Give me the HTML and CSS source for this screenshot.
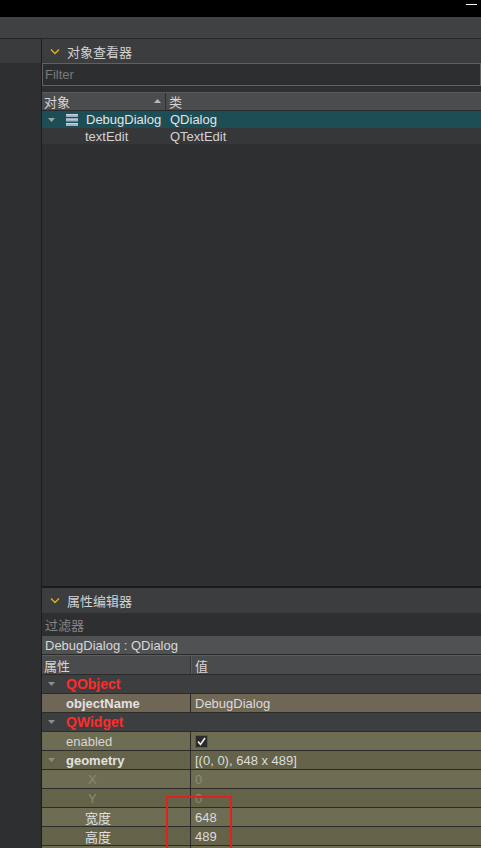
FILE: index.html
```html
<!DOCTYPE html>
<html>
<head>
<meta charset="utf-8">
<link rel="stylesheet" href="styles.css">
</head>
<body>
<div class="app">
  <div class="titlebar"><span class="min-dash"></span></div>
  <div class="toolbar"></div>
  <div class="main">
    <div class="leftpane">
      <div class="left-top"></div>
    </div>
    <div class="rightpane">
      <div class="dock-title">
        <svg class="chev" width="10" height="7" viewBox="0 0 10 7"><path d="M1 1.5 L5 5.5 L9 1.5" fill="none" stroke="#e3b21c" stroke-width="1.3"/></svg>
        <span>对象查看器</span>
      </div>
      <div class="filter-box"><span class="placeholder">Filter</span></div>
      <div class="gap"></div>
      <div class="tree-header">
        <div class="th th-obj"><span>对象</span>
          <svg class="sort" width="7" height="4" viewBox="0 0 7 4"><path d="M0 4 L3.5 0 L7 4 Z" fill="#b8b8b8"/></svg>
        </div>
        <div class="th th-cls"><span>类</span></div>
      </div>
      <div class="tree-row selected">
        <div class="tc tc-obj">
          <svg class="arrow" width="7" height="4" viewBox="0 0 7 4"><path d="M0 0 L7 0 L3.5 4 Z" fill="#9aa3a5"/></svg>
          <svg class="menu-ico" width="12" height="13" viewBox="0 0 12 13"><rect x="0" y="1" width="12" height="3" fill="#9fb1c9"/><rect x="0" y="5.5" width="12" height="3" fill="#9fb1c9"/><rect x="0" y="10" width="12" height="3" fill="#9fb1c9"/><rect x="0" y="1" width="12" height="1" fill="#c9d5e4"/><rect x="0" y="5.5" width="12" height="1" fill="#c9d5e4"/><rect x="0" y="10" width="12" height="1" fill="#c9d5e4"/></svg>
          <span>DebugDialog</span>
        </div>
        <div class="tc tc-cls">QDialog</div>
      </div>
      <div class="tree-row child">
        <div class="tc tc-obj"><span class="child-name">textEdit</span></div>
        <div class="tc tc-cls">QTextEdit</div>
      </div>
      <div class="tree-fill"></div>
      <div class="splitter"></div>
      <div class="dock-title dock-title2">
        <svg class="chev" width="10" height="7" viewBox="0 0 10 7"><path d="M1 1.5 L5 5.5 L9 1.5" fill="none" stroke="#e3b21c" stroke-width="1.3"/></svg>
        <span>属性编辑器</span>
      </div>
      <div class="filter2"><span class="placeholder">过滤器</span></div>
      <div class="class-label">DebugDialog : QDialog</div>
      <div class="prop-header">
        <div class="ph ph-name">属性</div>
        <div class="ph ph-val">值</div>
      </div>
      <div class="prow group">
        <div class="pn"><svg class="arrow" width="7" height="4" viewBox="0 0 7 4"><path d="M0 0 L7 0 L3.5 4 Z" fill="#8e8e8e"/></svg><span class="grp">QObject</span></div>
      </div>
      <div class="prow brown">
        <div class="pn"><span class="lvl1 bold">objectName</span></div>
        <div class="pv">DebugDialog</div>
      </div>
      <div class="prow group">
        <div class="pn"><svg class="arrow" width="7" height="4" viewBox="0 0 7 4"><path d="M0 0 L7 0 L3.5 4 Z" fill="#8e8e8e"/></svg><span class="grp">QWidget</span></div>
      </div>
      <div class="prow olive-a">
        <div class="pn"><span class="lvl1">enabled</span></div>
        <div class="pv"><svg class="check" width="13" height="13" viewBox="0 0 13 13"><rect x="0.5" y="0.5" width="12" height="12" fill="#2b2b2b" stroke="#5a5a50"/><path d="M3 6.5 L5.5 9.5 L10 3" fill="none" stroke="#f2f2f2" stroke-width="1.6"/></svg></div>
      </div>
      <div class="prow olive-b">
        <div class="pn"><svg class="arrow" width="7" height="4" viewBox="0 0 7 4"><path d="M0 0 L7 0 L3.5 4 Z" fill="#8e8e80"/></svg><span class="bold">geometry</span></div>
        <div class="pv">[(0, 0), 648 x 489]</div>
      </div>
      <div class="prow olive-a">
        <div class="pn"><span class="lvl2 dim">X</span></div>
        <div class="pv dim">0</div>
      </div>
      <div class="prow olive-b">
        <div class="pn"><span class="lvl2 dim">Y</span></div>
        <div class="pv dim">0</div>
      </div>
      <div class="prow olive-a">
        <div class="pn"><span class="lvl2c">宽度</span></div>
        <div class="pv">648</div>
      </div>
      <div class="prow olive-b">
        <div class="pn"><span class="lvl2c">高度</span></div>
        <div class="pv">489</div>
      </div>
      <div class="prow olive-a">
        <div class="pn"></div>
        <div class="pv"></div>
      </div>
    </div>
  </div>
  <div class="highlight"></div>
</div>
</body>
</html>
```

FILE: styles.css
```css
* { box-sizing: border-box; }
html, body { margin: 0; padding: 0; }
body {
  width: 481px;
  height: 848px;
  overflow: hidden;
  background: #2e2f31;
  font-family: "Liberation Sans", "Noto Sans CJK SC", sans-serif;
  font-size: 13px;
  color: #d6d6d6;
}
.app { position: relative; width: 481px; height: 848px; overflow: hidden; }

.titlebar {
  height: 17px;
  background: #000;
  display: flex;
  justify-content: flex-end;
  align-items: flex-start;
}
.min-dash {
  display: block;
  width: 11px;
  height: 1px;
  background: #fff;
  margin-top: 4px;
  margin-right: 4px;
}
.toolbar {
  height: 22px;
  background: #404142;
  border-bottom: 1px solid #262627;
}

.main { display: flex; height: 809px; }
.leftpane {
  width: 42px;
  flex: none;
  background: #2e2f31;
  border-right: 1px solid #1c1c1d;
}
.left-top { height: 24px; background: #3a3b3c; }

.rightpane { flex: 1; display: flex; flex-direction: column; min-width: 0; }

.dock-title {
  height: 24px;
  flex: none;
  background: #3c3d3e;
  display: flex;
  align-items: center;
  color: #d2d2d2;
  font-size: 13px;
}
.dock-title2 { height: 25px; }
.chev { margin-left: 8px; margin-right: 7px; }

.filter-box {
  height: 23px;
  flex: none;
  background: #2d2e30;
  border: 1px solid #606162;
  display: flex;
  align-items: center;
  padding-left: 2px;
}
.placeholder { color: #7a7a7a; }
.gap { height: 6px; flex: none; background: #2e2f31; }

.tree-header {
  height: 19px;
  flex: none;
  display: flex;
  background: #4b4c4d;
  border-top: 1px solid #5a5b5c;
  border-bottom: 1px solid #2a2a2b;
}
.th { display: flex; align-items: center; color: #d6d6d6; }
.th-obj {
  width: 124px;
  padding-left: 2px;
  justify-content: space-between;
  border-right: 1px solid #2e2f30;
  padding-right: 4px;
}
.th-cls { padding-left: 3px; flex: 1; }
.sort { margin-bottom: 2px; }

.tree-row { display: flex; flex: none; align-items: center; }
.tree-row.selected { height: 17px; background: #1d4e56; color: #e4e4e4; }
.tree-row.child { height: 16px; background: #363739; color: #d2d2d2; }
.tc { display: flex; align-items: center; height: 100%; }
.tc-obj { width: 124px; }
.tc-cls { padding-left: 4px; }
.arrow { margin-left: 6px; margin-right: 11px; flex: none; }
.menu-ico { margin-right: 8px; flex: none; }
.child-name { padding-left: 43px; }

.tree-fill { height: 442px; flex: none; background: #2e2f31; }
.splitter { height: 2px; flex: none; background: #1b1b1c; }

.filter2 {
  height: 23px;
  flex: none;
  background: #2e2f31;
  display: flex;
  align-items: center;
  padding-left: 3px;
}
.filter2 .placeholder { color: #858585; }
.class-label {
  height: 19px;
  flex: none;
  background: #505152;
  border-bottom: 1px solid #2b2b2c;
  display: flex;
  align-items: center;
  padding-left: 3px;
  color: #d8d8d8;
}
.prop-header {
  height: 20px;
  flex: none;
  display: flex;
  background: #4a4b4c;
  border-top: 1px solid #5b5c5d;
  border-bottom: 1px solid #2b2b2c;
}
.ph { display: flex; align-items: center; }
.ph-name { width: 149px; padding-left: 2px; border-right: 1px solid #353637; }
.ph-val { padding-left: 3px; border-left: 1px solid #5a5b5c; }

.prow {
  height: 19px;
  flex: none;
  display: flex;
  border-bottom: 1px solid #2b2b28;
}
.pn {
  width: 149px;
  display: flex;
  align-items: center;
  border-right: 1px solid #2b2b28;
  flex: none;
}
.pv { display: flex; align-items: center; padding-left: 4px; flex: 1; color: #dcdcdc; }
.prow.group { background: #3d3e40; }
.prow.group .pn { border-right: none; }
.grp { color: #ff2b2b; font-weight: bold; font-size: 14px; }
.prow.brown { background: #6f6656; }
.prow.olive-a { background: #6e6d53; }
.prow.olive-b { background: #64634a; }
.bold { font-weight: bold; color: #e2e2e2; }
.lvl1 { padding-left: 24px; }
.lvl2 { padding-left: 46px; }
.lvl2c { padding-left: 43px; color: #e0e0e0; }
.dim { color: #8c8b72; }
.check { display: block; }

.highlight {
  position: absolute;
  left: 166px;
  top: 796px;
  width: 66px;
  height: 70px;
  border: 2px solid #e3201f;
}
```
